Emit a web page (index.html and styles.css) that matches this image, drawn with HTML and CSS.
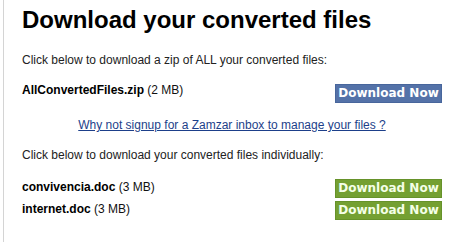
FILE: index.html
```html
<!DOCTYPE html>
<html>
<head>
<meta charset="utf-8">
<link rel="stylesheet" href="styles.css">
</head>
<body>
<div class="panel">
  <h1 class="title">Download your converted files</h1>
  <p class="intro">Click below to download a zip of ALL your converted files:</p>
  <div class="file-row first">
    <span class="file"><b>AllConvertedFiles.zip</b> (2 MB)</span>
    <a class="btn btn-blue">Download Now</a>
  </div>
  <p class="signup"><a href="#">Why not signup for a Zamzar inbox to manage your files ?</a></p>
  <p class="intro intro-2">Click below to download your converted files individually:</p>
  <div class="file-list">
    <div class="file-row">
      <span class="file"><b>convivencia.doc</b> (3 MB)</span>
      <a class="btn btn-green">Download Now</a>
    </div>
    <div class="file-row">
      <span class="file"><b>internet.doc</b> (3 MB)</span>
      <a class="btn btn-green">Download Now</a>
    </div>
  </div>
</div>
</body>
</html>
```
FILE: styles.css
```css
html, body {
  margin: 0;
  padding: 0;
  background: #ffffff;
}
body {
  font-family: "Liberation Sans", Arial, sans-serif;
  color: #111;
  width: 457px;
  height: 242px;
  overflow: hidden;
}
.panel {
  margin-left: 3px;
  border-left: 1px solid #d4d4d4;
  height: 242px;
  padding: 0 15px 0 18px;
  box-sizing: border-box;
}
.title {
  margin: 0;
  padding-top: 5px;
  font-size: 24px;
  line-height: 30px;
  font-weight: bold;
  color: #000;
}
.intro {
  margin: 18px 0 0 0;
  font-size: 12px;
  line-height: 14px;
  color: #222;
}
.file-row {
  display: flex;
  justify-content: space-between;
  align-items: flex-start;
  font-size: 12px;
  line-height: 14px;
}
.file-row.first {
  margin-top: 15px;
}
.file {
  padding-top: 1px;
}
.file b { color: #000; }
.btn {
  font-family: "DejaVu Sans", Verdana, sans-serif;
  font-weight: bold;
  font-size: 12px;
  line-height: 17px;
  color: #fff;
  width: 105px;
  text-align: center;
  white-space: nowrap;
}
.file-row.first .btn {
  margin-top: 2px;
}
.btn-blue {
  background: #5472a8;
  border: 1px solid #48669c;
}
.btn-green {
  background: #74a032;
  border: 1px solid #66922a;
  color: #f4ffe8;
}
.signup {
  margin: 15px 0 0 0;
  text-align: center;
  font-size: 12px;
  line-height: 14px;
}
.signup a {
  color: #1d3f8a;
  text-decoration: underline;
}
.intro-2 { margin-top: 16px; }
.file-list {
  margin-top: 17px;
  display: flex;
  flex-direction: column;
  gap: 3px;
}
```
